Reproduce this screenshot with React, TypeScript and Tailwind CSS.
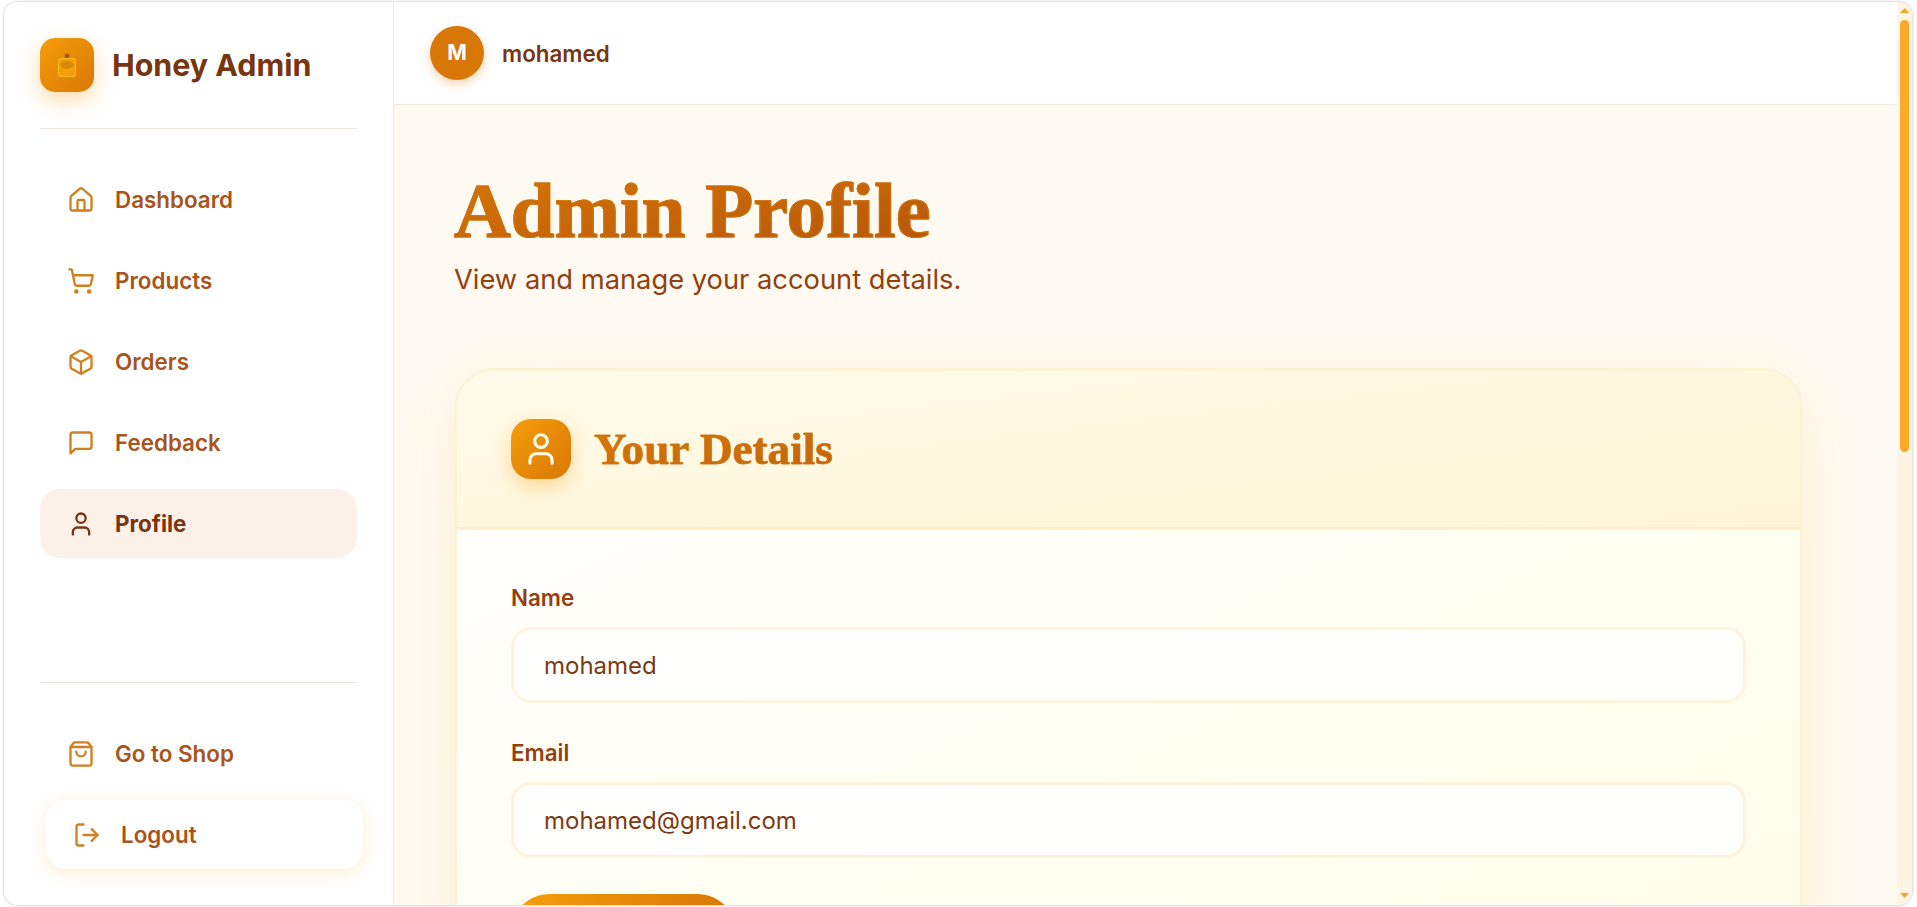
import { Box, House, LogOut, ShoppingBag, ShoppingCart, User } from 'lucide-react'
import type { ComponentType } from 'react'

type IconProps = { size?: number; strokeWidth?: number; className?: string }

function FeedbackIcon({ size = 24, strokeWidth = 2, className }: IconProps) {
  return (
    <svg
      width={size}
      height={size}
      viewBox="0 0 24 24"
      fill="none"
      stroke="currentColor"
      strokeWidth={strokeWidth}
      strokeLinecap="round"
      strokeLinejoin="round"
      className={className}
    >
      <path d="M21 15a2 2 0 0 1-2 2H7l-4 4V5a2 2 0 0 1 2-2h14a2 2 0 0 1 2 2z" />
    </svg>
  )
}

const navItems: { label: string; icon: ComponentType<IconProps>; active?: boolean }[] = [
  { label: 'Dashboard', icon: House },
  { label: 'Products', icon: ShoppingCart },
  { label: 'Orders', icon: Box },
  { label: 'Feedback', icon: FeedbackIcon },
  { label: 'Profile', icon: User, active: true },
]

function NavItem({ label, icon: Icon, active }: { label: string; icon: ComponentType<IconProps>; active?: boolean }) {
  return (
    <a
      className={`flex h-[69px] items-center gap-5 rounded-[20px] px-[27px] text-[22.4px] ${
        active ? 'bg-[#fbf1e8] font-bold text-[#78350f]' : 'font-semibold text-[#a8541a]'
      }`}
    >
      <Icon size={28} strokeWidth={2} className={active ? 'text-[#78350f]' : 'text-[#d08021]'} />
      {label}
    </a>
  )
}

function HoneyLogo() {
  return (
    <div className="flex h-[54px] w-[54px] items-center justify-center rounded-[15px] bg-linear-to-br from-[#f59e0b] to-[#d97706] shadow-[0_8px_20px_rgba(245,158,11,0.35)]">
      <svg width="24" height="26" viewBox="0 0 24 26">
        <circle cx="12" cy="4" r="2.5" fill="#b45309" />
        <rect x="3.5" y="6.5" width="17" height="18" rx="2.5" fill="#f59e0b" stroke="#fbbf24" strokeWidth="1" />
        <ellipse cx="12" cy="13" rx="6.5" ry="4" fill="#d98a0b" />
      </svg>
    </div>
  )
}

function Field({ label, value }: { label: string; value: string }) {
  return (
    <div>
      <label className="block text-[22.4px] leading-[28px] font-semibold text-[#92400e]">{label}</label>
      <input
        readOnly
        value={value}
        className="mt-[15px] h-[76px] w-full rounded-[20px] border-[3px] border-[#fdf3dc] bg-white/80 px-[30px] text-[24px] text-[#7b3a14] outline-none"
      />
    </div>
  )
}

function ScrollBar() {
  return (
    <div className="flex w-[15px] shrink-0 flex-col items-center bg-[#fef4e3] pt-[6px] pb-[7px]">
      <svg width="9" height="5" viewBox="0 0 9 5">
        <path d="M4.5 0 9 5H0z" fill="#f5a32c" />
      </svg>
      <div className="mt-[7px] h-[432px] w-[9px] rounded-full bg-[#fbaa27]" />
      <svg width="9" height="5" viewBox="0 0 9 5" className="mt-auto">
        <path d="M0 0h9L4.5 5z" fill="#f5a32c" />
      </svg>
    </div>
  )
}

export default function App() {
  return (
    <div className="h-screen overflow-hidden bg-white pt-0.5 pr-[5px] pb-0.5 pl-1 font-['Inter',sans-serif]">
      <div className="flex h-full overflow-hidden rounded-[14px] bg-white shadow-[0_0_3px_rgba(0,0,0,0.3)]">
        <aside className="flex w-[390px] shrink-0 flex-col border-r border-[#f0ebe6] bg-white px-9 pt-9 pb-9">
          <div className="flex items-center gap-[18px] border-b border-[#f0e8e0] pb-9">
            <HoneyLogo />
            <span className="pt-0.5 text-[30.4px] font-bold text-[#78350f]">Honey Admin</span>
          </div>
          <nav className="mt-9 flex flex-1 flex-col gap-3">
            {navItems.map((item) => (
              <NavItem key={item.label} {...item} />
            ))}
          </nav>
          <div className="flex flex-col gap-3 border-t border-[#f0e8e0] pt-9">
            <NavItem label="Go to Shop" icon={ShoppingBag} />
            <div className="translate-x-1.5 rounded-[20px] bg-white shadow-[0_4px_16px_rgba(245,158,11,0.18)]">
              <NavItem label="Logout" icon={LogOut} />
            </div>
          </div>
        </aside>

        <div className="min-w-0 flex-1 overflow-hidden bg-[#fffaf1]">
          <header className="flex h-[103px] items-center gap-[18px] border-b border-[#f6e9dd] bg-white px-9">
            <div className="flex h-[54px] w-[54px] shrink-0 items-center justify-center rounded-full bg-[#d97706] text-[21px] font-bold text-white shadow-[0_4px_10px_rgba(217,119,6,0.3)]">
              M
            </div>
            <span className="pt-0.5 text-[22.4px] font-semibold text-[#78350f]">mohamed</span>
          </header>

          <main className="px-[60px] pt-[60px]">
            <h1 className="w-fit bg-linear-to-br from-[#d97706] to-[#b45309] bg-clip-text font-['Liberation_Serif',serif] text-[78.6px] leading-[92px] font-bold text-transparent [-webkit-text-stroke:1.2px_#cc700a]">
              Admin Profile
            </h1>
            <p className="mt-[5px] text-[27.3px] leading-[36px] text-[#92400e]">View and manage your account details.</p>

            <section className="mt-[70px] w-[1349px] overflow-hidden rounded-[40px] border-[3px] border-[#fdf3d6] bg-linear-to-br from-white to-[#fffde7] shadow-[0_20px_60px_rgba(245,158,11,0.12)]">
              <div className="flex h-[159px] items-center gap-[23px] border-b-[3px] border-[#fdf0c8] bg-linear-to-br from-[#fffaea] to-[#fef6d6] px-[54px]">
                <div className="flex h-[60px] w-[60px] items-center justify-center rounded-[20px] bg-linear-to-br from-[#f59e0b] to-[#d97706] shadow-[0_8px_20px_rgba(245,158,11,0.35)]">
                  <User size={38} strokeWidth={2} className="text-[#fffbeb]" />
                </div>
                <h2 className="bg-linear-to-br from-[#d97706] to-[#c2650a] bg-clip-text font-['Liberation_Serif',serif] text-[45.2px] leading-[56px] font-bold text-transparent [-webkit-text-stroke:0.5px_#cc700a]">
                  Your Details
                </h2>
              </div>
              <div className="flex flex-col gap-[36px] px-[54px] pt-[54px] pb-[54px]">
                <Field label="Name" value="mohamed" />
                <Field label="Email" value="mohamed@gmail.com" />
                <button
                  aria-label="Save"
                  className="h-[76px] w-[225px] rounded-full bg-linear-to-r from-[#f59e0b] to-[#d97706]"
                />
              </div>
            </section>
          </main>
        </div>

        <ScrollBar />
      </div>
    </div>
  )
}
